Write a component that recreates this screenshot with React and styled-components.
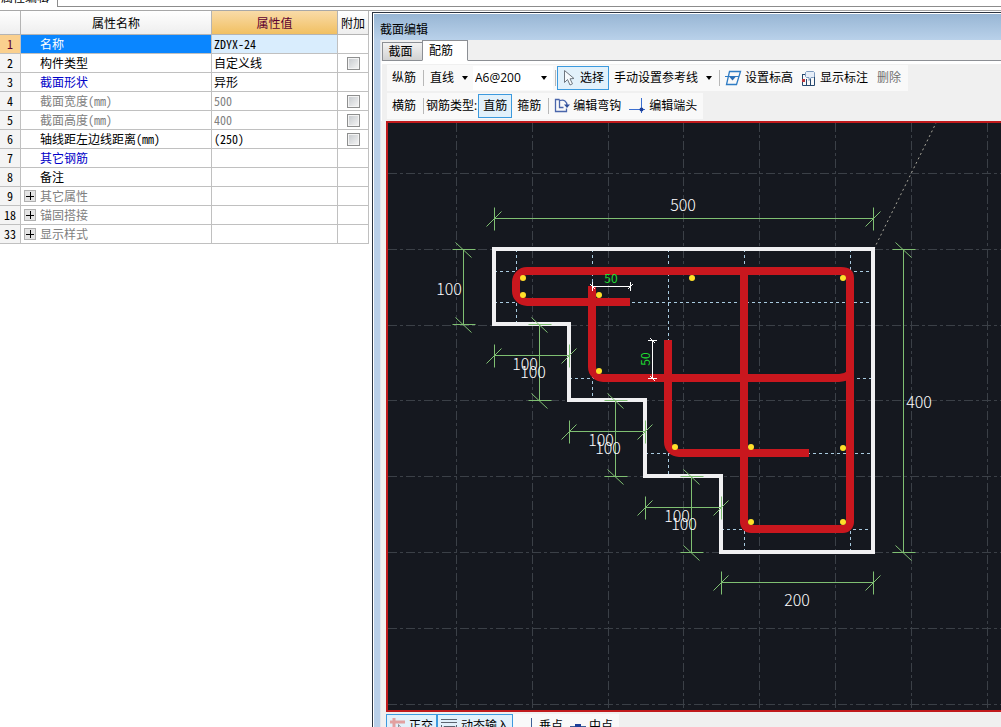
import React, { useState } from "react";
import styled, { createGlobalStyle } from "styled-components";

const PROPS = [
  { no: 1, name: "名称", value: "ZDYX-24" },
  { no: 2, name: "构件类型", value: "自定义线", check: true },
  { no: 3, name: "截面形状", value: "异形", color: "#0000c8" },
  { no: 4, name: "截面宽度(mm)", value: "500", color: "#808080", check: true },
  { no: 5, name: "截面高度(mm)", value: "400", color: "#808080", check: true },
  { no: 6, name: "轴线距左边线距离(mm)", value: "(250)", check: true },
  { no: 7, name: "其它钢筋", value: "", color: "#0000c8" },
  { no: 8, name: "备注", value: "" },
  { no: 9, name: "其它属性", value: "", color: "#808080", group: true },
  { no: 18, name: "锚固搭接", value: "", color: "#808080", group: true },
  { no: 33, name: "显示样式", value: "", color: "#808080", group: true },
];

const PropertyTable = () => {
  const [selected, setSelected] = useState(1);
  return (
    <Table>
      <colgroup>
        <col width="21" />
        <col width="191" />
        <col width="126" />
        <col width="31" />
      </colgroup>
      <thead>
        <tr>
          <HeadCell />
          <HeadCell>属性名称</HeadCell>
          <HeadCell $active>属性值</HeadCell>
          <HeadCell>附加</HeadCell>
        </tr>
      </thead>
      <tbody>
        {PROPS.map((row) => (
          <tr key={row.no} onClick={() => setSelected(row.no)}>
            <NoCell $active={row.no === selected}>{row.no}</NoCell>
            <NameCell $active={row.no === selected} $color={row.color}>
              <NameBox $group={row.group}>
                {row.group && (
                  <Expand aria-label={"展开" + row.name}>
                    <svg width="8" height="8">
                      <path d="M0 4.5h8M4.5 0v8" stroke="#000" />
                    </svg>
                  </Expand>
                )}
                {row.name}
              </NameBox>
            </NameCell>
            <ValueCell $active={row.no === selected} $color={row.color === "#808080" ? row.color : "#000"}>
              {row.value}
            </ValueCell>
            <CheckCell>{row.check && <Check type="checkbox" aria-label={row.name} />}</CheckCell>
          </tr>
        ))}
      </tbody>
    </Table>
  );
};

const Arrow = () => (
  <svg width="6" height="4">
    <path d="M0 0h6L3 4z" fill="#000" />
  </svg>
);

const CursorIcon = () => (
  <svg width="14" height="18" fill="none">
    <path d="M2.500 1.500v12l3-3 2.500 5.500 2.500-1.200-2.500-5 4-.3z" fill="#f6fafd" stroke="#6f7780" />
  </svg>
);

const LevelIcon = () => (
  <svg width="17" height="16" fill="none">
    <path d="M4.500 1.500h11l-4 13h-10z" stroke="#2f7cc4" strokeWidth="1.300" />
    <path d="M0 6.500h14" stroke="#2f7cc4" />
    <path d="M4 6.500h7l-3.500 4z" fill="#2a6db5" />
  </svg>
);

const NoteIcon = () => (
  <svg width="16" height="17" fill="none">
    <path d="M1.500 4v11.500h12V3M5.500 9v6M9.500 8v7M1.500 4.500h3" stroke="#26486e" />
    <path d="M1 9h3v3H1z" fill="#b8383c" />
    <path d="M5.500 1.500h7l1 1v4l-1 1h-2.500l-2 3v-3h-2.500l-1-1v-4z" fill="#e6eef8" stroke="#7f9cc0" />
  </svg>
);

const HookIcon = () => (
  <svg width="16" height="16" fill="none" stroke="#4a66ab">
    <path d="M5.500 1.500h-4v12h11v-3" strokeWidth="1.300" />
    <path d="M5.500 1.500v8h4M6 2.500c4-1.500 7 1 7 5" strokeWidth="1.300" />
    <path d="M10 6.500h6l-3 3.500z" fill="#2f4f9a" stroke="none" />
  </svg>
);

const EndIcon = () => (
  <svg width="17" height="16">
    <path d="M0 11.500h16" stroke="#3b6fd0" />
    <path d="M12.500 0v15" stroke="#3b6fd0" />
    <circle cx="12.500" cy="11.500" r="2" fill="#1d3f99" />
  </svg>
);

const OrthoIcon = () => (
  <svg width="16" height="16" fill="none">
    <path d="M0 4h15M4 0v16" stroke="#e2a0a0" strokeWidth="3" />
    <path d="M8.500 6.500v7l2-2 2 0z" fill="#fff" stroke="#8a9098" />
  </svg>
);

const InputIcon = () => (
  <svg width="17" height="16" fill="none" stroke="#5c6470">
    <path d="M0 1.500h16M0 4.500h16M.5 7v8M15.500 7v8" />
    <path d="M3 8.500h11v5H3z" fill="#dfe3e8" />
  </svg>
);

const GREEN = "#7fbf72";

// dimension line with an end bar and a slash at both ends
const Dim = ({ x, y, len, vertical }) => {
  const d = vertical
    ? `M0 0v${len}M-11 0h23M-11 ${len}h23M-8-7l16 15M-8 ${len - 7}l16 15`
    : `M0 0h${len}M0-11v23M${len}-11v23M-8 8l15-15M${len - 8} 8l15-15`;
  return <path transform={`translate(${x + 0.5} ${y + 0.5})`} d={d} stroke={GREEN} fill="none" />;
};

const DIMS = [
  { x: 0, y: -31, len: 379 },
  { x: 0, y: 106, len: 75 },
  { x: 75, y: 182, len: 76 },
  { x: 151, y: 258, len: 76 },
  { x: 227, y: 333, len: 152 },
  { x: -31, y: 0, len: 75, vertical: true },
  { x: 45, y: 75, len: 76, vertical: true },
  { x: 121, y: 151, len: 76, vertical: true },
  { x: 197, y: 227, len: 76, vertical: true },
  { x: 409, y: 0, len: 303, vertical: true },
];

const LABELS = [
  [189, -44, "500"],
  [-45, 40, "100"],
  [31, 115, "100"],
  [39, 123, "100"],
  [107, 191, "100"],
  [114, 199, "100"],
  [183, 267, "100"],
  [190, 275, "100"],
  [425, 153, "400"],
  [303, 351, "200"],
];

const DOTS = [
  [29, 29], [29, 46], [105, 46], [105, 122], [198, 29], [349, 29],
  [181, 198], [257, 198], [349, 199], [257, 273], [349, 273],
];

const GUIDES =
  "M0 22.500h379M0 53.500h379M75 129.500h304M151 204.500h228M227 280.500h152" +
  "M22.500 0v75M98.500 0v151M174.500 0v227M250.500 0v303M356.500 0v303";

const Drawing = () => (
  <Sheet role="img" aria-label="截面配筋图">
    <g stroke="#3b4047" strokeDasharray="9 3 3 3">
      {Array.from({ length: 30 }, (_, i) => {
        const x = Math.round(68 + i * 75.8) + 0.5;
        return <line key={i} x1={x} x2={x} y1="0" y2="100%" />;
      })}
      {Array.from({ length: 20 }, (_, i) => {
        const y = Math.round(50 + i * 75.8) + 0.5;
        return <line key={i} y1={y} y2={y} x1="0" x2="100%" />;
      })}
    </g>
    {/* origin is the top left corner of the section */}
    <g transform="translate(106 126)" fill="none">
      <path d="M380 0L442-126" stroke="#a8a69a" strokeDasharray="2 3" />
      <path d={GUIDES} stroke="#a9cbe0" strokeDasharray="3 3" />
      <path d="M0 0H379V303H227V227H151V151H75V75H0Z" stroke="#f0f0f2" strokeWidth="4" />
      <g stroke="#c9171e" strokeWidth="8">
        <path d="M136 53H33a11 11 0 0 1-11-11V33a11 11 0 0 1 11-11H347q9 0 9 7V273a7 7 0 0 1-7 7H257a7 7 0 0 1-7-7V22" />
        <path d="M98 37V118a11 11 0 0 0 11 11H345q6 0 11-4" />
        <path d="M174 91V193a11 11 0 0 0 11 11H315" />
      </g>
      {DOTS.map(([x, y]) => (
        <circle key={x + "-" + y} cx={x} cy={y} r="3" fill="#ffe02a" />
      ))}
      {DIMS.map((d) => (
        <Dim key={d.x + "-" + d.y} {...d} />
      ))}
      <path d="M98.500 37.500h38M98.500 33v9M136.500 33v9M96 35l5 5M134 40l5-5" stroke="#fff" />
      <path d="M158.500 91.500v38M154 91.500h9M154 129.500h9M156 89l5 5M156 127l5 5" stroke="#fff" />
      {LABELS.map(([x, y, text]) => (
        <DimText key={x} x={x} y={y + 6}>
          {text}
        </DimText>
      ))}
      <HookText x="117" y="34">50</HookText>
      <HookText transform="translate(156 110) rotate(-90)">50</HookText>
    </g>
  </Sheet>
);

const App = () => {
  const [tab, setTab] = useState("配筋");
  const [bar, setBar] = useState("直筋");
  return (
    <Page>
      <Global />
      <TopStrip>
        <TopTab>属性编辑</TopTab>
        <TopRest />
      </TopStrip>
      <Body>
        <PropertyTable />
        <Editor>
          <Title>截面编辑</Title>
          <Content>
            <Tabs>
              {["截面", "配筋"].map((t) => (
                <Tab key={t} $active={t === tab} onClick={() => setTab(t)}>
                  {t}
                </Tab>
              ))}
              <TabsRest />
            </Tabs>
            <Tools>
              <Toolbar>
                <Tool>纵筋</Tool>
                <Sep />
                <Tool $drop>
                  直线
                  <Arrow />
                </Tool>
                <SelectBox>
                  <Select aria-label="钢筋信息" defaultValue="A6@200">
                    <option>A6@200</option>
                  </Select>
                  <Arrow />
                </SelectBox>
                <Sep />
                <Tool $active>
                  <CursorIcon />
                  选择
                </Tool>
                <Tool $drop>
                  手动设置参考线
                  <Arrow />
                </Tool>
                <Sep />
                <IconTool>
                  <LevelIcon />
                  设置标高
                </IconTool>
                <IconTool>
                  <NoteIcon />
                  显示标注
                </IconTool>
                <Tool disabled>删除</Tool>
              </Toolbar>
              <Toolbar>
                <Tool>横筋</Tool>
                <Sep />
                <BarLabel>钢筋类型:</BarLabel>
                {["直筋", "箍筋"].map((b) => (
                  <Tool key={b} $active={b === bar} onClick={() => setBar(b)}>
                    {b}
                  </Tool>
                ))}
                <Sep />
                <IconTool>
                  <HookIcon />
                  编辑弯钩
                </IconTool>
                <IconTool>
                  <EndIcon />
                  编辑端头
                </IconTool>
              </Toolbar>
            </Tools>
            <Canvas>
              <Drawing />
            </Canvas>
            <StatusBar>
              <StatusTools>
                <IconTool $active>
                  <OrthoIcon />
                  正交
                </IconTool>
                <IconTool $active>
                  <InputIcon />
                  动态输入
                </IconTool>
                <Snap>
                  <svg width="17" height="16">
                    <path d="M11.500 0v13" stroke="#3d5f96" />
                  </svg>
                  垂点
                </Snap>
                <Snap>
                  <svg width="17" height="16">
                    <path d="M0 8.500h16" stroke="#3d5f96" />
                    <path d="M5 6h6v5H5z" fill="#1d3f99" />
                  </svg>
                  中点
                </Snap>
              </StatusTools>
            </StatusBar>
          </Content>
        </Editor>
      </Body>
    </Page>
  );
};

const Global = createGlobalStyle`
  * {
    box-sizing: border-box;
  }
  body {
    margin: 0;
    background: #ffffff;
    overflow: hidden;
  }
  body, button, select {
    color: #000000;
    font-family: "Open Sans", "Noto Sans CJK SC", sans-serif;
    font-size: 12px;
    line-height: 16px;
  }
  svg {
    display: block;
    flex: none;
  }
`;

const Page = styled.div`
  height: 100vh;
  display: flex;
  flex-direction: column;
`;

const TopStrip = styled.div`
  height: 11px;
  flex: none;
  display: flex;
  border-bottom: 1px solid #a8a8a8;
`;

const TopTab = styled.div`
  width: 58px;
  height: 7px;
  display: flex;
  align-items: flex-end;
  padding: 0 0 1px 1px;
  overflow: hidden;
  border-right: 1px solid #8c8c8c;
  white-space: nowrap;
`;

const TopRest = styled.div`
  flex: 1;
  height: 7px;
  border-bottom: 1px solid #8c8c8c;
`;

const Body = styled.div`
  flex: 1;
  min-height: 0;
  display: flex;
  align-items: flex-start;
  gap: 3px;
`;

const Table = styled.table`
  width: 369px;
  flex: none;
  table-layout: fixed;
  border-collapse: separate;
  border-spacing: 0;
  font-family: "Noto Sans Mono CJK SC", "Noto Sans CJK SC", monospace;
  font-variant-ligatures: none;
  font-feature-settings: "ccmp" 0, "liga" 0, "dlig" 0;
`;

const HeadCell = styled.th`
  height: 24px;
  padding: 0;
  border-right: 1px solid #b4b4b4;
  border-bottom: 1px solid #b4b4b4;
  font-weight: 400;
  white-space: nowrap;
  color: ${(props) => (props.$active ? "#5c0030" : "#000000")};
  background: ${(props) =>
    props.$active ? "linear-gradient(#f9dba8, #f1c062)" : "linear-gradient(#ffffff, #eeeeee)"};
`;

const Cell = styled.td`
  height: 19px;
  padding: 0;
  border-right: 1px solid #c0c0c0;
  border-bottom: 1px solid #c0c0c0;
  white-space: nowrap;
`;

const NoCell = styled(Cell)`
  text-align: center;
  color: ${(props) => (props.$active ? "#5c0030" : "#000000")};
  background: ${(props) => (props.$active ? "#fad08e" : "#f4f4f4")};
`;

const NameCell = styled(Cell)`
  color: ${(props) => (props.$active ? "#ffffff" : props.$color || "#000000")};
  background: ${(props) => (props.$active ? "#0a86ff" : "#ffffff")};
`;

const NameBox = styled.div`
  display: flex;
  align-items: center;
  gap: 4px;
  padding-left: ${(props) => (props.$group ? 3 : 19)}px;
`;

const Expand = styled.button`
  width: 12px;
  height: 12px;
  padding: 0 0 0 1px;
  border: 1px solid #b0b0b0;
  background: #e4e4e4;
`;

const ValueCell = styled(Cell)`
  padding-left: 2px;
  color: ${(props) => props.$color};
  background: ${(props) => (props.$active ? "#d9edfd" : "#ffffff")};
`;

const CheckCell = styled(Cell)`
  text-align: center;
`;

const Check = styled.input`
  appearance: none;
  display: block;
  width: 13px;
  height: 13px;
  margin: 0 auto;
  border: 1px solid #8e8f8f;
  box-shadow: inset 0 0 0 1px #f4f4f4;
  background: linear-gradient(135deg, #c4c8cc, #f6f6f6);
`;

const Editor = styled.div`
  flex: 1;
  min-width: 0;
  align-self: stretch;
  display: flex;
  flex-direction: column;
  margin-top: 1px;
  padding-left: 7px;
  border-top: 1px solid #2c3440;
  border-left: 1px solid #2c3440;
  background: #b9cfe8;
  box-shadow: inset 1px 1px 0 #ffffff;
`;

const Title = styled.div`
  height: 26px;
  flex: none;
  display: flex;
  align-items: center;
  margin: 1px 0 0 -6px;
  padding: 6px 0 0 6px;
  background: linear-gradient(#98b6d4, #b9d1ea);
`;

const Content = styled.div`
  flex: 1;
  min-height: 0;
  display: flex;
  flex-direction: column;
  border-left: 1px solid #e0e6ee;
  background: #f0f0f0;
`;

const Tabs = styled.div`
  height: 21px;
  flex: none;
  display: flex;
  align-items: flex-end;
  padding-left: 1px;
`;

const Tab = styled.button`
  width: ${(props) => (props.$active ? 46 : 40)}px;
  height: ${(props) => (props.$active ? 21 : 19)}px;
  padding: 0 ${(props) => (props.$active ? 8 : 4)}px 0 0;
  border: 1px solid #8c8f94;
  border-right-width: ${(props) => (props.$active ? 1 : 0)}px;
  border-bottom-color: ${(props) => (props.$active ? "#ffffff" : "#8c8f94")};
  background: ${(props) => (props.$active ? "#ffffff" : "linear-gradient(#f2f2f2, #d2d2d2)")};
`;

const TabsRest = styled.div`
  flex: 1;
  border-bottom: 1px solid #8c8f94;
`;

const Tools = styled.div`
  flex: none;
  display: flex;
  flex-direction: column;
  align-items: flex-start;
  gap: 2px;
  padding: 1px 0 2px 5px;
  border-top: 3px solid #ffffff;
  border-left: 1px solid #ffffff;
`;

const Toolbar = styled.div`
  display: flex;
  align-items: center;
  height: 26px;
  padding-right: 2px;
  background: #f9f9f9;
`;

const Tool = styled.button`
  height: 24px;
  flex: none;
  display: flex;
  align-items: center;
  gap: ${(props) => (props.$drop ? 8 : 4)}px;
  padding: 0 4px;
  border: 1px solid ${(props) => (props.$active ? "#3c9ade" : "transparent")};
  background: ${(props) => (props.$active ? "#e2f1fb" : "transparent")};
  white-space: nowrap;
  &:disabled {
    color: #707070;
  }
`;

const IconTool = styled(Tool)`
  gap: 3px;
  padding: 0 3px;
`;

const Sep = styled.span`
  width: 1px;
  height: 16px;
  flex: none;
  margin: 0 1px 0 2px;
  background: #b8b8b8;
`;

const SelectBox = styled.span`
  position: relative;
  width: 80px;
  flex: none;
  svg {
    position: absolute;
    right: 6px;
    top: 10px;
    pointer-events: none;
  }
`;

const Select = styled.select`
  appearance: none;
  display: block;
  width: 100%;
  height: 24px;
  padding: 0 0 0 2px;
  border: 0;
  border-radius: 0;
  background: #ffffff;
`;

const BarLabel = styled.span`
  flex: none;
  padding: 0 1px;
`;

const Canvas = styled.div`
  flex: 1;
  min-height: 0;
  margin-left: 5px;
  border: 2px solid #c01a1c;
  border-right: 0;
  background: #15181f;
`;

const Sheet = styled.svg`
  width: 100%;
  height: 100%;
`;

const DimText = styled.text`
  fill: #ffffff;
  font-family: "Noto Sans CJK SC", sans-serif;
  font-size: 16px;
  font-weight: 300;
  text-anchor: middle;
`;

const HookText = styled.text`
  fill: #1fdc32;
  font-family: "Noto Sans CJK SC", sans-serif;
  font-size: 12px;
  text-anchor: middle;
`;

const StatusBar = styled.div`
  height: 15px;
  flex: none;
  padding: 2px 0 0 5px;
  overflow: hidden;
`;

const StatusTools = styled.div`
  display: inline-flex;
  padding-right: 6px;
  background: #f9f9f9;
`;

const Snap = styled.button`
  display: flex;
  align-items: center;
  gap: 2px;
  padding: 0 0 0 7px;
  height: 24px;
  border: 0;
  background: transparent;
  white-space: nowrap;
`;

export default App;
